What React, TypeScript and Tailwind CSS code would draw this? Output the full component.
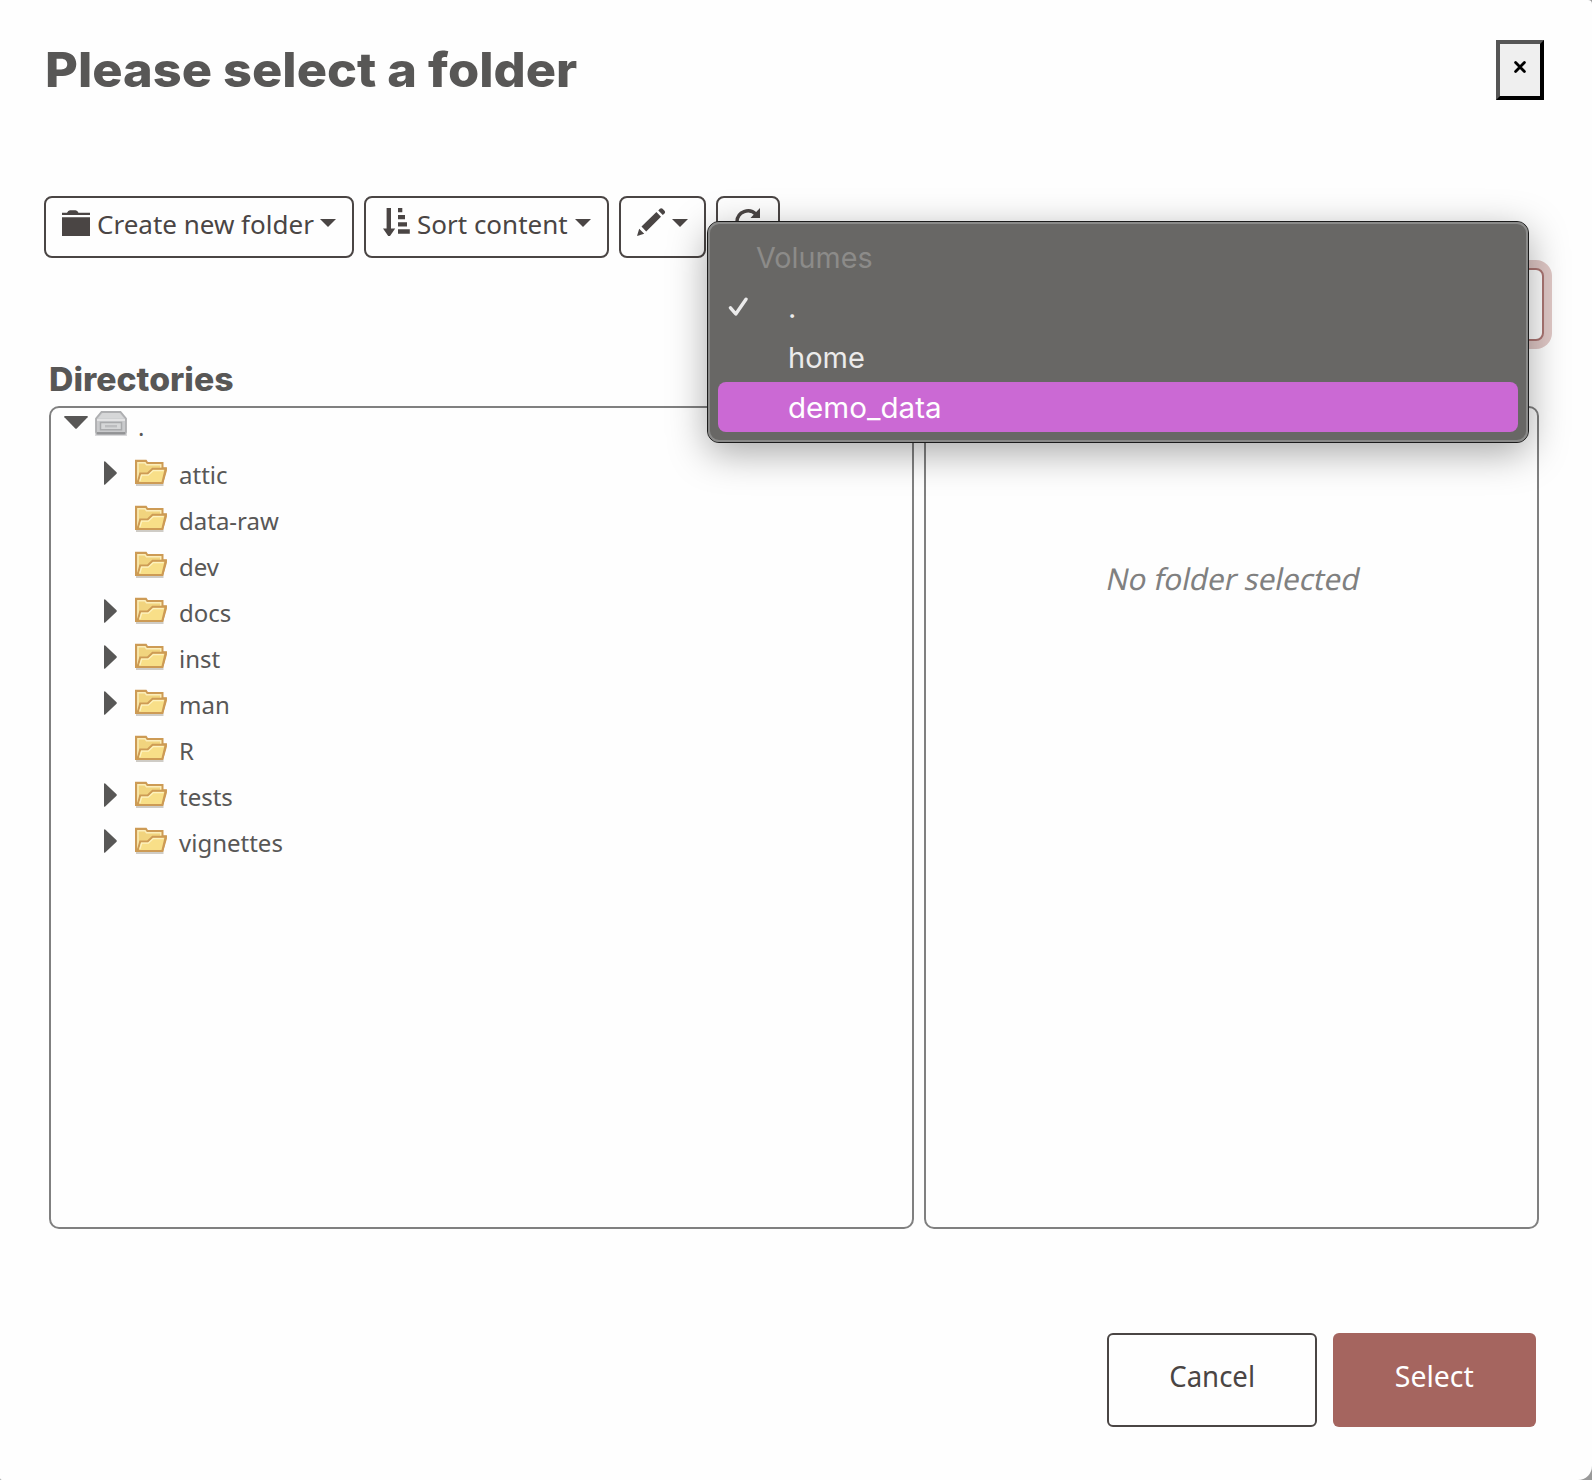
import type { ReactNode } from "react";

const directories = [
  { name: "attic", expandable: true },
  { name: "data-raw", expandable: false },
  { name: "dev", expandable: false },
  { name: "docs", expandable: true },
  { name: "inst", expandable: true },
  { name: "man", expandable: true },
  { name: "R", expandable: false },
  { name: "tests", expandable: true },
  { name: "vignettes", expandable: true },
];

function Caret() {
  return (
    <svg className="mt-[21px] h-2 w-4 shrink-0" viewBox="0 0 16 8" fill="currentColor">
      <path d="M0 0h16L8 8z" />
    </svg>
  );
}

function NewFolderIcon() {
  return (
    <svg className="mt-3 h-[26px] w-7 shrink-0" viewBox="0 0 28 26" fill="currentColor">
      <path d="M0 5V2.8h5Q6 .2 8 .2h5.5q2 0 3 2.6H28V5zM0 7.3h28V26H0z" />
    </svg>
  );
}

function SortIcon() {
  return (
    <svg className="mt-2.5 h-7 w-7 shrink-0" viewBox="0 0 28 28" fill="currentColor">
      <path d="M3.6 0H8v20.5h4.2L7 28H5.2L0 20.5h3.6zM15 0h4.3v4.2H15zM15 7h7v4.2h-7zM15 14.2h9v4.2h-9zM15 21.2h11.8v4.5H15z" />
    </svg>
  );
}

function PencilIcon() {
  return (
    <svg className="mt-2.5 h-7 w-[29px] shrink-0" viewBox="0 0 29 28" fill="currentColor">
      <path d="M0 28l2.2-7.2 5 5zM4.5 18.4L19.4 4l4.6 4.8L9.2 23.4zM21.3 2.4l1.6-1.6q1.4-1.2 2.7 0l1.9 2q1.2 1.3 0 2.6L25.8 7z" />
    </svg>
  );
}

function RepeatIcon() {
  return (
    <svg className="mt-2.5 h-7 w-7 shrink-0" viewBox="0 0 28 28">
      <path d="M3 13.5a11 11 0 0 1 19-7.2M3 13.5a11 11 0 0 0 20.5 5" fill="none" stroke="currentColor" strokeWidth="3.4" />
      <path d="M26 0v10H16.5z" fill="currentColor" />
    </svg>
  );
}

function DriveIcon() {
  return (
    <svg className="mt-[3px] h-[26px] w-8 shrink-0" viewBox="0 0 32 26">
      <path d="M0 23h32v2H0z" fill="#d9d9db" />
      <path d="M6.5 1h19L31 7.5V21q0 2-2 2H3q-2 0-2-2V7.5z" fill="#c9cacc" stroke="#aeafb1" strokeWidth="1.8" />
      <path d="M7.5 2h17L29 7.4H3z" fill="#d6d7d8" />
      <path d="M2 8h28v2H2z" fill="#e3e3e4" />
      <path d="M5.5 11.5h21v7.3h-21z" fill="#d6d7d8" stroke="#a9aaac" strokeWidth="1.5" />
      <path d="M10 14h12v2.4H10z" fill="#bcbdbf" />
      <path d="M2 22h28" stroke="#8f9092" strokeWidth="1.8" />
    </svg>
  );
}

function FolderIcon() {
  return (
    <svg className="mt-[7px] h-7 w-8 shrink-0" viewBox="0 0 32 28">
      <path d="M1 24.5h27.5V27H1z" fill="#cfccc6" />
      <path d="M1.1 24V1.9h9.8l1.4 2.1H27.4v5.4h3.4v2.3L27.3 24z" fill="#f1d47e" stroke="#cd9b55" strokeWidth="2.2" />
      <path d="M3 21V3.8h7l1.5 2h14.2v3" fill="none" stroke="#fbeebb" strokeWidth="1.4" />
      <path d="M2.6 24L5.2 14.4h7.4l5-4.6h13.1L27.3 24z" fill="#f8df88" stroke="#cd9b55" strokeWidth="2" />
      <path d="M4.9 22L6.6 16.2h6.7l5-4.6h10.4" fill="none" stroke="#fdf2c0" strokeWidth="1.3" />
    </svg>
  );
}

function ToolButton({ className, children }: { className: string; children?: ReactNode }) {
  return (
    <button
      className={`flex h-[62px] shrink-0 items-start rounded-lg border-2 border-[#4a4544] pl-4 text-[26px] leading-[52px] whitespace-nowrap text-[#4a4544] ${className}`}
    >
      {children}
    </button>
  );
}

function VolumesMenu() {
  return (
    <div className="absolute -top-[47px] right-[15px] z-10 h-[222px] w-[822px] rounded-xl border border-[#1c1c1c] bg-[#686765] font-['Inter',sans-serif] text-[29px] leading-[51px] text-[#ebebeb] shadow-[0_10px_38px_rgba(0,0,0,0.34)]">
      <div className="h-full rounded-[11px] border-2 border-[#8a8a89] px-2 pt-2">
        <div className="h-[50px] pl-[38px] text-[#8c8b89]">
          <span className="inline-block origin-left scale-x-[0.99]">Volumes</span>
        </div>
        <div className="flex h-[50px]">
          <svg className="mt-[15px] ml-2.5 h-[20px] w-[21px]" viewBox="0 0 21 20" fill="none" stroke="currentColor" strokeWidth="3.4" strokeLinecap="round" strokeLinejoin="round">
            <path d="M2.5 10.8l5.3 6.2L18 2.2" />
          </svg>
          <span className="pl-[39px]">.</span>
        </div>
        <div className="h-[50px] pl-[70px]">home</div>
        <div className="h-[50px] rounded-lg bg-[#cb69d4] pl-[70px] text-white">
          <span className="inline-block origin-left scale-x-[1.02]">demo_data</span>
        </div>
      </div>
    </div>
  );
}

export default function App() {
  return (
    <div className="h-[1480px] w-[1592px] overflow-hidden bg-[#999]">
      <div className="flex h-full flex-col rounded-tr-[4px] rounded-br-[14px] rounded-bl-[2px] bg-[#fefefe] pt-10 pr-12 pl-11 font-['Noto_Sans',sans-serif] text-[#585756]">
        <header className="flex h-[60px] items-center justify-between">
          <h1 className="ml-px origin-left scale-x-[1.052] font-['Inter',sans-serif] text-[48px] leading-[60px] font-extrabold">
            Please select a folder
          </h1>
          <button className="flex h-[60px] w-12 justify-center border-4 border-t-[#555] border-r-black border-b-black border-l-[#555] bg-[#efefef]">
            <svg className="mt-[17px] h-3 w-3" viewBox="0 0 12 12" stroke="#000" strokeWidth="2.8" strokeLinecap="round">
              <path d="M1.6 1.6l8.8 8.8M10.4 1.6l-8.8 8.8" />
            </svg>
          </button>
        </header>

        <div className="mt-24 flex gap-2.5">
          <ToolButton className="w-[310px]">
            <NewFolderIcon />
            <span className="ml-[7px] w-[223px] text-left">Create new folder</span>
            <Caret />
          </ToolButton>
          <ToolButton className="w-[245px]">
            <span className="flex pl-px">
              <SortIcon />
            </span>
            <span className="ml-1.5 w-[158px] text-left">Sort content</span>
            <Caret />
          </ToolButton>
          <ToolButton className="w-[87px]">
            <PencilIcon />
            <span className="flex pl-1.5">
              <Caret />
            </span>
          </ToolButton>
          <ToolButton className="w-16">
            <RepeatIcon />
          </ToolButton>
        </div>

        <div className="relative mt-2.5 flex justify-end">
          <div className="h-[73px] w-[820px] rounded-lg border-2 border-[#ac7673] bg-[#fefefe] shadow-[0_0_0_8px_#e0c8c6]" />
          <VolumesMenu />
        </div>

        <h2 className="mt-5 ml-[5px] h-[37px] w-fit origin-left scale-x-[1.055] font-['Inter',sans-serif] text-[32px] leading-[38px] font-extrabold">
          Directories
        </h2>

        <main className="mt-2 mr-[5px] ml-[5px] flex h-[823px] gap-2.5">
          <section className="w-[865px] rounded-[10px] border-2 border-[#808080] pl-[13px] text-[24px]">
            <div className="flex h-11 items-start">
              <svg className="mt-2 h-[13px] w-6" viewBox="0 0 24 13" fill="currentColor">
                <path d="M.8 0h22.4q1 .2.4 1.2L13 12.3q-1 1-2 0L.4 1.2Q-.2.2.8 0z" />
              </svg>
              <span className="ml-[7px] flex">
                <DriveIcon />
              </span>
              <span className="ml-[11px] leading-[37px]">.</span>
            </div>
            <ul>
              {directories.map((dir) => (
                <li key={dir.name} className="flex h-[46px] items-start pl-10">
                  <span className="w-[31px]">
                    {dir.expandable && (
                      <svg className="mt-[9px] h-6 w-[13px]" viewBox="0 0 13 24" fill="currentColor">
                        <path d="M0 .8Q.2-.2 1.2.4L12.3 11q1 1 0 2L1.2 23.6Q.2 24.2 0 23.2z" />
                      </svg>
                    )}
                  </span>
                  <FolderIcon />
                  <span className="ml-3 leading-[46px]">{dir.name}</span>
                </li>
              ))}
            </ul>
          </section>
          <section className="w-[615px] rounded-[10px] border-2 border-[#808080] pt-[149px] pl-1 text-center text-[30px] leading-[44px] text-[#808080]">
            <span className="inline-block scale-x-[0.985] -skew-x-12">No folder selected</span>
          </section>
        </main>

        <footer className="mt-[104px] mr-2 flex justify-end gap-4 text-[29px] leading-[82px]">
          <button className="h-[94px] w-[210px] rounded-md border-2 border-[#4a4544] pb-2 text-[#4a4544]">
            <span className="inline-block scale-x-[0.95]">Cancel</span>
          </button>
          <button className="h-[94px] w-[203px] rounded-md bg-[#a5655f] pb-2 text-white">
            <span className="inline-block scale-x-[0.98]">Select</span>
          </button>
        </footer>
      </div>
    </div>
  );
}
